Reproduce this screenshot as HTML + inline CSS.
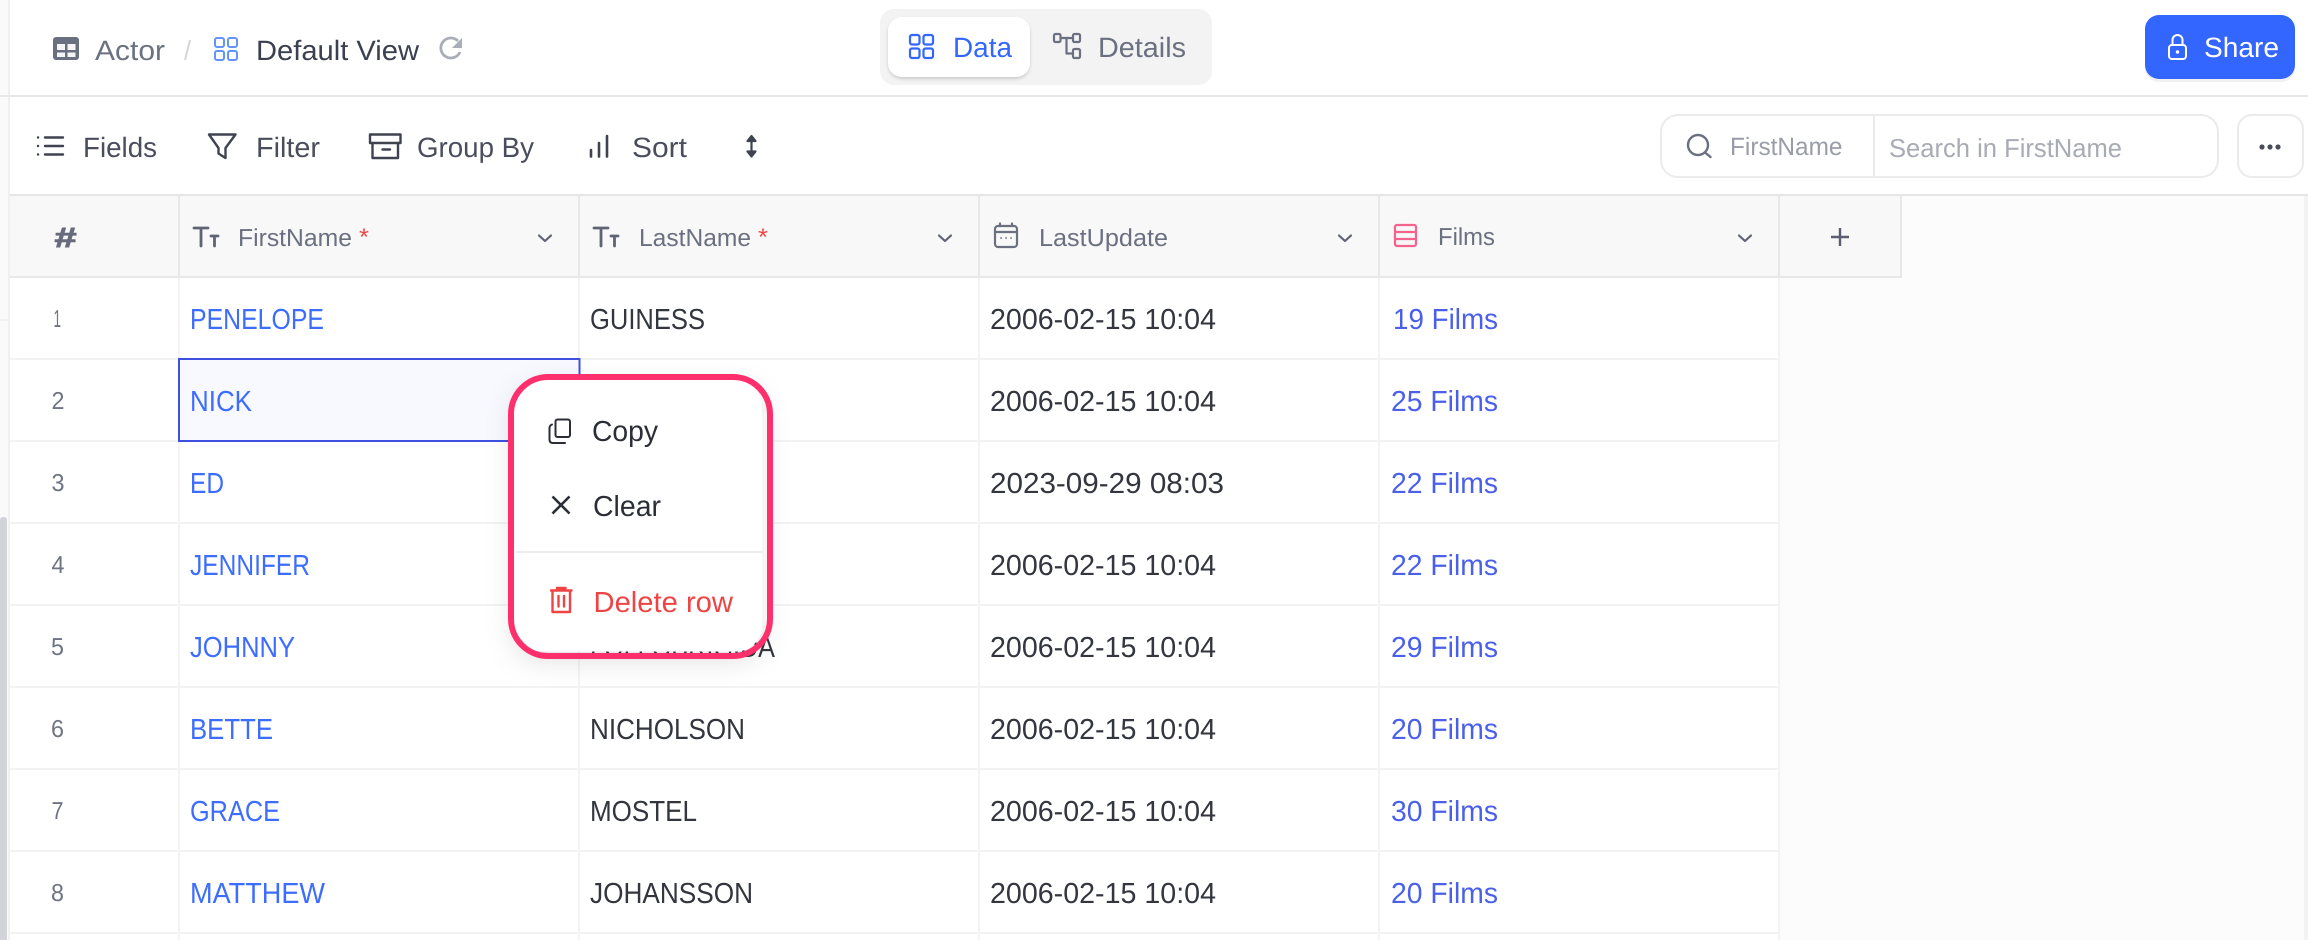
<!DOCTYPE html>
<html><head><meta charset="utf-8"><title>Actor</title>
<style>
html,body{margin:0;padding:0;width:2308px;height:940px;overflow:hidden;background:#fff}
svg{display:block}
text{font-family:"Liberation Sans",sans-serif;text-rendering:geometricPrecision}
.c{font-size:29px}
.n{fill:#3d6dff}.d{fill:#33363e}.f{fill:#4a60ea}
.r{font-size:24.500px;fill:#6f7484}
.t{font-size:28px;fill:#4a4e5c}
.h{font-size:24.500px;fill:#6b7080}
.s{font-size:29px;fill:#ef4444}
.m{font-size:29px;fill:#2b2e36}
.i{fill:none;stroke-linecap:round;stroke-linejoin:round}
</style></head><body>
<svg width="2308" height="940" viewBox="0 0 2308 940" xmlns="http://www.w3.org/2000/svg">
<defs><filter id="sh" x="-30%" y="-30%" width="160%" height="160%"><feDropShadow dx="0" dy="8" stdDeviation="14" flood-color="#000" flood-opacity=".13"/></filter>
<filter id="sa" x="-10%" y="-10%" width="120%" height="130%"><feDropShadow dx="0" dy="2" stdDeviation="1.5" flood-color="#000" flood-opacity=".16"/></filter></defs>
<rect width="2308" height="940" fill="#fff"/>
<!-- left strip -->
<rect x="0" y="0" width="8" height="940" fill="#fafafa"/>
<rect x="8" y="0" width="2" height="940" fill="#f0f0f0"/>
<rect x="0" y="319" width="8" height="2" fill="#f0f0f0"/>
<rect x="0" y="517" width="7" height="430" rx="3" fill="#d2d3d8"/>
<!-- far right -->
<rect x="1780" y="196" width="524" height="744" fill="#fcfcfc"/>
<rect x="2304" y="196" width="4" height="744" fill="#f3f3f3"/>
<!-- top lines -->
<rect x="0" y="95" width="2308" height="2" fill="#e8e8e8"/>
<rect x="10" y="194" width="2298" height="2" fill="#e6e6e6"/>
<!-- breadcrumb -->
<rect x="53" y="37" width="26" height="23" rx="3" fill="#6b7080"/>
<rect x="57" y="44" width="8" height="6" fill="#f5f5f6"/><rect x="67.500" y="44" width="8" height="6" fill="#f5f5f6"/>
<rect x="57" y="52.500" width="8" height="4.500" fill="#f5f5f6"/><rect x="67.500" y="52.500" width="8" height="4.500" fill="#f5f5f6"/>
<text x="95" y="60" font-size="28" fill="#6b7280" textLength="70" lengthAdjust="spacingAndGlyphs">Actor</text>
<path d="M190 40L185 60" stroke="#d5d6da" stroke-width="2" fill="none"/>
<g class="i" stroke="#6294f9" stroke-width="2"><rect x="215" y="38" width="9" height="9" rx="2"/><rect x="228" y="38" width="9" height="9" rx="2"/><rect x="215" y="51" width="9" height="9" rx="2"/><rect x="228" y="51" width="9" height="9" rx="2"/></g>
<text x="256" y="60" font-size="28" fill="#3b4050" textLength="163" lengthAdjust="spacingAndGlyphs">Default View</text>
<path d="M458 41A10 10 0 1 0 460 52" fill="none" stroke="#a9adb5" stroke-width="2.800"/><path d="M462 38V48H452Z" fill="#a9adb5"/>
<!-- segment -->
<rect x="880" y="9" width="332" height="76" rx="14" fill="#f3f3f4"/>
<rect x="888" y="17" width="142" height="60" rx="14" fill="#fff" filter="url(#sa)"/>
<g class="i" stroke="#3366ff" stroke-width="2.200"><rect x="910" y="35" width="9.500" height="9.500" rx="2"/><rect x="923.500" y="35" width="9.500" height="9.500" rx="2"/><rect x="910" y="48.500" width="9.500" height="9.500" rx="2"/><rect x="923.500" y="48.500" width="9.500" height="9.500" rx="2"/></g>
<text x="953" y="57" font-size="28" fill="#3366ff" textLength="59" lengthAdjust="spacingAndGlyphs">Data</text>
<g class="i" stroke="#6b7080" stroke-width="2.200"><rect x="1054" y="34" width="6.500" height="8" rx="1.500"/><rect x="1073" y="34" width="7" height="8" rx="1.500"/><rect x="1073" y="49" width="7" height="9" rx="1.500"/><path d="M1060.500 38H1073M1066.500 38V53.500H1073"/></g>
<text x="1098" y="57" font-size="28" fill="#6b7080" textLength="88" lengthAdjust="spacingAndGlyphs">Details</text>
<!-- share -->
<rect x="2145" y="18" width="150" height="64" rx="14" fill="#f0f0f1"/>
<rect x="2145" y="15" width="150" height="64" rx="14" fill="#3366ff"/>
<g class="i" stroke="#fff" stroke-width="2"><rect x="2169" y="45" width="17" height="14" rx="3"/><path d="M2172.500 45V40a5 5 0 0 1 10 0v5"/></g><circle cx="2177.500" cy="52" r="1.700" fill="#fff"/>
<text x="2204" y="57" font-size="28" fill="#fff" textLength="75" lengthAdjust="spacingAndGlyphs">Share</text>
<!-- toolbar -->
<g class="i" stroke="#3f4350" stroke-width="2.400"><path d="M45 137.500H63M45 146H63M45 154.500H63"/><path d="M38 137.500h.1M38 146h.1M38 154.500h.1"/></g>
<text class="t" x="83" y="157" textLength="74" lengthAdjust="spacingAndGlyphs">Fields</text>
<path class="i" stroke="#3f4350" stroke-width="2.400" d="M209 134.500H235.500L225.500 148V158L218.500 153.500V148Z"/>
<text class="t" x="256" y="157" textLength="64" lengthAdjust="spacingAndGlyphs">Filter</text>
<g class="i" stroke="#3f4350" stroke-width="2.400"><rect x="370" y="134.500" width="30.500" height="8.500"/><path d="M372.500 143V158H398V143M382.500 149.500H390"/></g>
<text class="t" x="417" y="157" textLength="117" lengthAdjust="spacingAndGlyphs">Group By</text>
<path class="i" stroke="#3f4350" stroke-width="2.600" d="M591 150V156.500M599 143V156.500M607 136V156.500"/>
<text class="t" x="632" y="157" textLength="55" lengthAdjust="spacingAndGlyphs">Sort</text>
<path stroke="#3f4350" stroke-width="2.200" fill="#3f4350" stroke-linejoin="round" d="M751.500 140V152M747.500 141L751.500 136L755.500 141ZM747.500 151.500L751.500 156.500L755.500 151.500Z"/>
<!-- search -->
<rect x="1661" y="115" width="557" height="62" rx="17" fill="#fff" stroke="#ebebeb" stroke-width="2"/>
<rect x="1873" y="115" width="2" height="62" fill="#ebebeb"/>
<g class="i" stroke="#6b7080" stroke-width="2.400"><circle cx="1698" cy="145" r="10"/><path d="M1705 152.500L1710.500 157"/></g>
<text x="1730" y="155" font-size="25" fill="#9a9da8" textLength="112.500" lengthAdjust="spacingAndGlyphs">FirstName</text>
<text x="1889" y="157" font-size="26" fill="#a8abb4" textLength="233" lengthAdjust="spacingAndGlyphs">Search in FirstName</text>
<rect x="2238" y="115" width="65" height="62" rx="14" fill="#fff" stroke="#ebebeb" stroke-width="2"/>
<circle cx="2262" cy="147" r="2.600" fill="#4a4e5c"/><circle cx="2270" cy="147" r="2.600" fill="#4a4e5c"/><circle cx="2278" cy="147" r="2.600" fill="#4a4e5c"/>
<!-- header -->
<rect x="10" y="196" width="1890" height="80" fill="#f8f8f8"/>
<rect x="10" y="276" width="1892" height="2" fill="#e8e8e8"/>
<rect x="178" y="196" width="2" height="80" fill="#e8e8e8"/><rect x="578" y="196" width="2" height="80" fill="#e8e8e8"/><rect x="978" y="196" width="2" height="80" fill="#e8e8e8"/><rect x="1378" y="196" width="2" height="80" fill="#e8e8e8"/><rect x="1778" y="196" width="2" height="80" fill="#e8e8e8"/><rect x="1900" y="196" width="2" height="82" fill="#e8e8e8"/>
<text x="54" y="247" font-size="28" font-weight="bold" font-style="italic" fill="#676b7c" stroke="#676b7c" stroke-width=".9" textLength="22" lengthAdjust="spacingAndGlyphs">#</text>
<g class="i" stroke="#5f6373" stroke-width="2.800"><path d="M194 228H208M201 228V246M211 236H218M214.500 236V246"/><path d="M594 228H608M601 228V246M611 236H618M614.500 236V246"/></g>
<text class="h" x="238" y="246" textLength="114" lengthAdjust="spacingAndGlyphs">FirstName</text>
<text x="359" y="245" font-size="24" fill="#ef4444" textLength="10" lengthAdjust="spacingAndGlyphs">*</text>
<text class="h" x="639" y="246" textLength="112" lengthAdjust="spacingAndGlyphs">LastName</text>
<text x="758" y="245" font-size="24" fill="#ef4444" textLength="10" lengthAdjust="spacingAndGlyphs">*</text>
<g class="i" stroke="#6b7080" stroke-width="2.200"><rect x="995" y="226" width="22" height="21" rx="3"/><path d="M1000 223.500V226M1012 223.500V226M995 232H1017"/></g>
<path class="i" stroke="#6b7080" stroke-width="1.800" d="M1001 238h.1M1006 238h.1M1011 238h.1"/>
<text class="h" x="1039" y="246" textLength="129" lengthAdjust="spacingAndGlyphs">LastUpdate</text>
<g class="i" stroke="#f4638e" stroke-width="2.200"><rect x="1395" y="225" width="21" height="21" rx="2"/><path d="M1395 232H1416M1395 239H1416"/></g>
<text class="h" x="1438" y="245" textLength="57" lengthAdjust="spacingAndGlyphs">Films</text>
<g class="i" stroke="#5f6373" stroke-width="2.200"><path d="M539 235.500L545 241L551 235.500"/><path d="M939 235.500L945 241L951 235.500"/><path d="M1339 235.500L1345 241L1351 235.500"/><path d="M1739 235.500L1745 241L1751 235.500"/></g>
<path d="M1840 228V246M1831 237H1849" stroke="#5a5e6e" stroke-width="2.400" fill="none"/>
<!-- grid lines -->
<g fill="#f3f3f4"><rect x="10" y="358" width="1770" height="2"/><rect x="10" y="440" width="1770" height="2"/><rect x="10" y="522" width="1770" height="2"/><rect x="10" y="604" width="1770" height="2"/><rect x="10" y="686" width="1770" height="2"/><rect x="10" y="768" width="1770" height="2"/><rect x="10" y="850" width="1770" height="2"/><rect x="10" y="932" width="1770" height="2"/>
<rect x="178" y="278" width="2" height="662"/><rect x="578" y="278" width="2" height="662"/><rect x="978" y="278" width="2" height="662"/><rect x="1378" y="278" width="2" height="662"/><rect x="1778" y="278" width="2" height="662"/></g>
<!-- selection -->
<rect x="179" y="359" width="400.500" height="82" fill="#f8f9ff" stroke="#3d50e0" stroke-width="2"/>
<!-- row numbers -->
<text class="r" x="53.500" y="327" textLength="7.500" lengthAdjust="spacingAndGlyphs">1</text>
<text class="r" x="51.500" y="409" textLength="13" lengthAdjust="spacingAndGlyphs">2</text>
<text class="r" x="51.500" y="491" textLength="13" lengthAdjust="spacingAndGlyphs">3</text>
<text class="r" x="51.500" y="573" textLength="13" lengthAdjust="spacingAndGlyphs">4</text>
<text class="r" x="51" y="655" textLength="13" lengthAdjust="spacingAndGlyphs">5</text>
<text class="r" x="51" y="737" textLength="13" lengthAdjust="spacingAndGlyphs">6</text>
<text class="r" x="51.500" y="819" textLength="12" lengthAdjust="spacingAndGlyphs">7</text>
<text class="r" x="51" y="901" textLength="13" lengthAdjust="spacingAndGlyphs">8</text>
<!-- first names -->
<text class="c n" x="190" y="329" textLength="134" lengthAdjust="spacingAndGlyphs">PENELOPE</text>
<text class="c n" x="190" y="411" textLength="62" lengthAdjust="spacingAndGlyphs">NICK</text>
<text class="c n" x="190" y="493" textLength="34" lengthAdjust="spacingAndGlyphs">ED</text>
<text class="c n" x="190" y="575" textLength="120" lengthAdjust="spacingAndGlyphs">JENNIFER</text>
<text class="c n" x="190" y="657" textLength="105" lengthAdjust="spacingAndGlyphs">JOHNNY</text>
<text class="c n" x="190" y="739" textLength="83" lengthAdjust="spacingAndGlyphs">BETTE</text>
<text class="c n" x="190" y="821" textLength="90" lengthAdjust="spacingAndGlyphs">GRACE</text>
<text class="c n" x="190" y="903" textLength="135" lengthAdjust="spacingAndGlyphs">MATTHEW</text>
<!-- last names -->
<text class="c d" x="590" y="329" textLength="115" lengthAdjust="spacingAndGlyphs">GUINESS</text>
<text class="c d" x="590" y="411" textLength="150" lengthAdjust="spacingAndGlyphs">WAHLBERG</text>
<text class="c d" x="590" y="493" textLength="90" lengthAdjust="spacingAndGlyphs">CHASE</text>
<text class="c d" x="590" y="575" textLength="80" lengthAdjust="spacingAndGlyphs">DAVIS</text>
<text class="c d" x="590" y="657" textLength="185" lengthAdjust="spacingAndGlyphs">LOLLOBRIGIDA</text>
<text class="c d" x="590" y="739" textLength="155" lengthAdjust="spacingAndGlyphs">NICHOLSON</text>
<text class="c d" x="590" y="821" textLength="107" lengthAdjust="spacingAndGlyphs">MOSTEL</text>
<text class="c d" x="590" y="903" textLength="163" lengthAdjust="spacingAndGlyphs">JOHANSSON</text>
<!-- dates -->
<text class="c d" x="990" y="329" textLength="226" lengthAdjust="spacingAndGlyphs">2006-02-15 10:04</text>
<text class="c d" x="990" y="411" textLength="226" lengthAdjust="spacingAndGlyphs">2006-02-15 10:04</text>
<text class="c d" x="990" y="493" textLength="234" lengthAdjust="spacingAndGlyphs">2023-09-29 08:03</text>
<text class="c d" x="990" y="575" textLength="226" lengthAdjust="spacingAndGlyphs">2006-02-15 10:04</text>
<text class="c d" x="990" y="657" textLength="226" lengthAdjust="spacingAndGlyphs">2006-02-15 10:04</text>
<text class="c d" x="990" y="739" textLength="226" lengthAdjust="spacingAndGlyphs">2006-02-15 10:04</text>
<text class="c d" x="990" y="821" textLength="226" lengthAdjust="spacingAndGlyphs">2006-02-15 10:04</text>
<text class="c d" x="990" y="903" textLength="226" lengthAdjust="spacingAndGlyphs">2006-02-15 10:04</text>
<!-- films -->
<text class="c f" x="1393" y="329" textLength="105" lengthAdjust="spacingAndGlyphs">19 Films</text>
<text class="c f" x="1391" y="411" textLength="107" lengthAdjust="spacingAndGlyphs">25 Films</text>
<text class="c f" x="1391" y="493" textLength="107" lengthAdjust="spacingAndGlyphs">22 Films</text>
<text class="c f" x="1391" y="575" textLength="107" lengthAdjust="spacingAndGlyphs">22 Films</text>
<text class="c f" x="1391" y="657" textLength="107" lengthAdjust="spacingAndGlyphs">29 Films</text>
<text class="c f" x="1391" y="739" textLength="107" lengthAdjust="spacingAndGlyphs">20 Films</text>
<text class="c f" x="1391" y="821" textLength="107" lengthAdjust="spacingAndGlyphs">30 Films</text>
<text class="c f" x="1391" y="903" textLength="107" lengthAdjust="spacingAndGlyphs">20 Films</text>
<!-- context menu -->
<rect x="514" y="380" width="248" height="271.500" rx="26" fill="#fff" filter="url(#sh)"/>
<rect x="762" y="412" width="5" height="214" fill="#f5f5f5"/>
<path d="M516 552H762" stroke="#ededed" stroke-width="2"/>
<g class="i" stroke="#2b2e36" stroke-width="2"><rect x="555.500" y="419.500" width="14.500" height="17.500" rx="2"/><path d="M552 424.500Q549.500 425.500 549.500 428V439.500Q549.500 443 553 443H565"/></g>
<text class="m" x="592" y="441" textLength="66" lengthAdjust="spacingAndGlyphs">Copy</text>
<path d="M552.500 496.500L569.500 513.500M569.500 496.500L552.500 513.500" stroke="#2b2e36" stroke-width="2.600" fill="none"/>
<text class="m" x="593" y="516" textLength="68" lengthAdjust="spacingAndGlyphs">Clear</text>
<g class="i" stroke="#ef4444" stroke-width="2.400"><path d="M551 590.500H571.500M557 590V588H565.500V590M552.500 591V612H570V591M558.500 596V606.500M564 596V606.500"/></g>
<text class="s" x="593.500" y="612" textLength="139.500" lengthAdjust="spacingAndGlyphs">Delete row</text>
<rect x="511" y="377" width="259" height="279" rx="37" fill="none" stroke="#fe2f6d" stroke-width="6"/>
</svg>
</body></html>
